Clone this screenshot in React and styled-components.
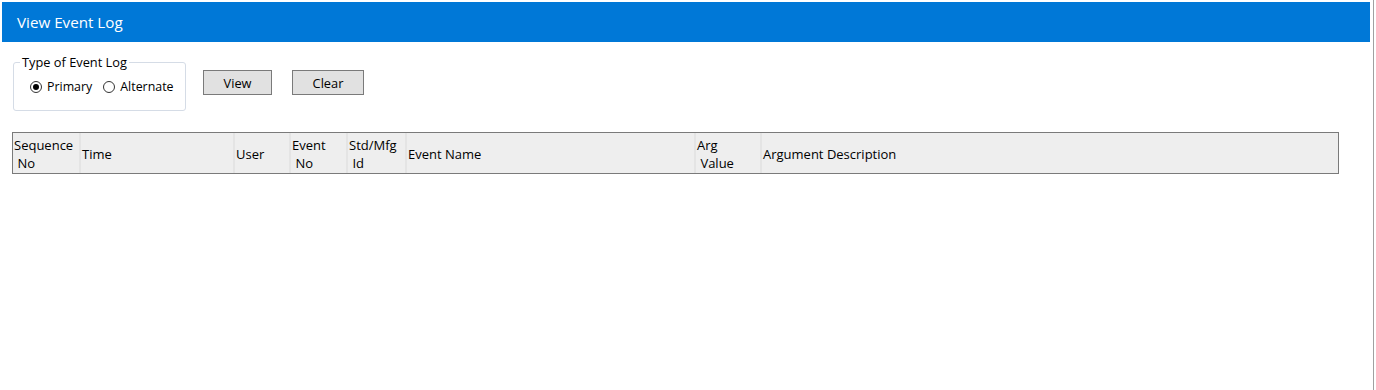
import React from "react";
import styled, { createGlobalStyle } from "styled-components";

const Global = createGlobalStyle`
  html, body { margin: 0; padding: 0; background: #fff; }
  body { font-family: "Segoe UI", "Open Sans", "Noto Sans", sans-serif; color: #000; }
`;

const Page = styled.div`
  width: 1374px;
  height: 390px;
  box-sizing: border-box;
  border-right: 1px solid #a0a0a0;
  padding: 2px 0 0 2px;
`;

const TitleBar = styled.div`
  width: 1368px;
  height: 40px;
  background: #0078d7;
  color: #fff;
  font-size: 15.2px;
  display: flex;
  align-items: center;
  padding-left: 15px;
  box-sizing: border-box;
`;

const Controls = styled.div`
  display: flex;
  align-items: flex-start;
  padding: 13px 0 0 11px;
  gap: 17px;
`;

const Group = styled.fieldset`
  margin: 0;
  width: 173px;
  height: 56px;
  box-sizing: border-box;
  border: 1px solid #d5dce6;
  border-radius: 3px;
  padding: 0 0 0 16px;
  font-size: 12.4px;
  legend {
    padding: 0 2px;
    margin-left: -10px;
    line-height: 14px;
    font-size: 12.8px;
  }
`;

const RadioRow = styled.div`
  display: flex;
  align-items: center;
  margin-top: 9px;
`;

const Radio = styled.span`
  width: 12px;
  height: 12px;
  border: 1px solid #333;
  border-radius: 50%;
  box-sizing: border-box;
  display: inline-flex;
  align-items: center;
  justify-content: center;
  margin-right: 5px;
  &::after {
    content: "";
    width: 6px;
    height: 6px;
    border-radius: 50%;
    background: ${(p) => (p.$checked ? "#000" : "transparent")};
  }
`;

const RadioLabel = styled.span`
  margin-right: 11px;
`;

const Button = styled.button`
  margin-top: 15px;
  width: ${(p) => p.$w}px;
  height: 25px;
  background: #e1e1e1;
  border: 1px solid #7a7a7a;
  font-family: inherit;
  font-size: 12.8px;
  color: #000;
  padding: 0;
  & + & { margin-left: 3px; }
`;

const Table = styled.div`
  margin: 21px 0 0 10px;
  width: 1327px;
  height: 42px;
  box-sizing: border-box;
  border: 1px solid #7a7a7a;
  background: #eeeeee;
  display: flex;
  font-size: 13px;
`;

const HeadCell = styled.div`
  width: ${(p) => p.$w}px;
  box-sizing: border-box;
  border-right: 2px solid #e4e4e4;
  padding-left: 1px;
  line-height: 18px;
  display: flex;
  flex-direction: column;
  justify-content: ${(p) => (p.$two ? "flex-start" : "center")};
  padding-top: ${(p) => (p.$two ? "3px" : "1px")};
  white-space: pre;
  &:last-child { border-right: none; flex: 1; }
`;

const cols = [
  { w: 68, t: "Sequence\n No", two: true },
  { w: 154, t: "Time" },
  { w: 56, t: "User" },
  { w: 57, t: "Event\n No", two: true },
  { w: 59, t: "Std/Mfg\n Id", two: true },
  { w: 289, t: "Event Name" },
  { w: 66, t: "Arg\n Value", two: true },
  { w: 577, t: "Argument Description" },
];

export default function App() {
  return (
    <>
      <Global />
      <Page>
        <TitleBar>View Event Log</TitleBar>
        <Controls>
          <Group>
            <legend>Type of Event Log</legend>
            <RadioRow>
              <Radio $checked />
              <RadioLabel>Primary</RadioLabel>
              <Radio />
              <span>Alternate</span>
            </RadioRow>
          </Group>
          <Button $w={69}>View</Button>
          <Button $w={72}>Clear</Button>
        </Controls>
        <Table>
          {cols.map((c) => (
            <HeadCell key={c.t} $w={c.w} $two={c.two}>
              {c.t}
            </HeadCell>
          ))}
        </Table>
      </Page>
    </>
  );
}
